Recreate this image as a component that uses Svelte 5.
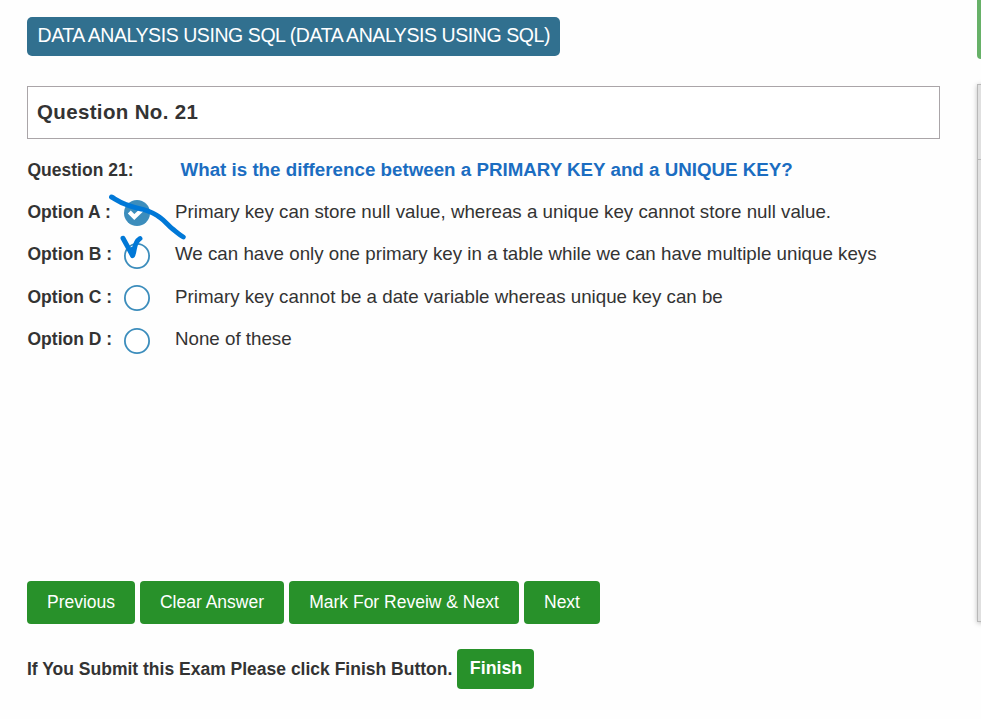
<script>
  const options = [
    { letter: 'A', text: 'Primary key can store null value, whereas a unique key cannot store null value.', checked: true },
    { letter: 'B', text: 'We can have only one primary key in a table while we can have multiple unique keys' },
    { letter: 'C', text: 'Primary key cannot be a date variable whereas unique key can be' },
    { letter: 'D', text: 'None of these' }
  ];
  const actions = [
    { label: 'Previous', width: 108 },
    { label: 'Clear Answer', width: 144 },
    { label: 'Mark For Reveiw & Next', width: 230 },
    { label: 'Next', width: 76 }
  ];
</script>

<div class="page">
  <main>
    <div class="badge"><span>DATA ANALYSIS USING SQL (DATA ANALYSIS USING SQL)</span></div>
    <div class="number"><span>Question No. 21</span></div>
    <div class="question">
      <b class="qlabel"><span>Question 21:</span></b>
      <b class="qtext"><span>What is the difference between a PRIMARY KEY and a UNIQUE KEY?</span></b>
    </div>
    <div class="options">
      {#each options as o}
        <div class="option">
          <b class="olabel"><span>Option {o.letter} :</span></b>
          <svg class="radio" width="28" height="28" viewBox="0 0 28 28">
            {#if o.checked}
              <circle cx="14" cy="14" r="13" fill="#3c8dbc" />
              <path d="M6.300 13L11.300 18L20 9.800" fill="none" stroke="#fff" stroke-width="4.200" />
            {:else}
              <circle cx="14" cy="14" r="12.1" fill="#fff" stroke="#3c8dbc" stroke-width="1.8" />
            {/if}
          </svg>
          <span class="otext">{o.text}</span>
        </div>
      {/each}
      <svg class="ink" width="90" height="80" viewBox="100 185 90 80">
        <path d="M111.500 197C116 199.500 120 202.500 126 204.500C132 207 138 208 143.500 209.500C150 211.500 155 213.500 160 217.500C165 221 168 225 172 228.500C176 231.500 179 234.500 183.300 237" />
        <path d="M123 238.200L132.600 255.700C135.500 250 133 243 140 238.500M131 251L132.600 255L133 249" />
      </svg>
    </div>
    <div class="actions">
      {#each actions as a}
        <button style="width: {a.width}px"><span>{a.label}</span></button>
      {/each}
    </div>
    <div class="submit">
      <b><span>If You Submit this Exam Please click Finish Button.</span></b>
      <button class="finish"><span>Finish</span></button>
    </div>
  </main>
  <aside>
    <div class="green"></div>
    <div class="panel"><div class="head"></div></div>
  </aside>
</div>

<style>
  :global(body) { background: #fefefe; overflow: hidden; }
  .page {
    display: flex; justify-content: space-between; width: 981px; height: 719px;
    overflow: hidden; color: #333; font-family: "Liberation Sans", Arial, sans-serif;
  }
  main { width: 913px; padding: 17px 0 0 27px; box-sizing: content-box; white-space: nowrap; }
  .badge {
    width: 533px; height: 39px; box-sizing: border-box; padding-left: 10.500px; border-radius: 5px;
    background: #31708f; color: #fff; font-size: 19.500px; line-height: 37px; letter-spacing: -.43px;
  }
  .number {
    height: 53px; box-sizing: border-box; margin-top: 30px; padding-left: 9px;
    border: 1px solid #aaa5a8; background: #fff; font-size: 20.500px; font-weight: bold; line-height: 50px;
    letter-spacing: .35px;
  }
  .question { display: flex; height: 42px; margin-top: 10px; line-height: 42px; }
  .qlabel { width: 153px; padding-left: .500px; font-size: 17.500px; }
  .qtext { color: #1b6dc1; font-size: 18.750px; }
  .options { position: relative; height: 169px; }
  .option { display: flex; height: 42.330px; line-height: 42px; }
  .olabel { width: 95.500px; padding-left: .500px; font-size: 17.500px; }
  .radio { flex: none; margin: 8px 24px 0 0; }
  .option:nth-child(even) .radio { margin-top: 9px; }
  .otext { font-size: 18.740px; }
  .ink { position: absolute; left: 73px; top: -6px; fill: none; stroke: #0078d7; stroke-width: 4.900; stroke-linecap: round; stroke-linejoin: round; }
  .actions { display: flex; gap: 5px; margin-top: 221px; }
  button {
    height: 43px; padding: 0 0 1px; border: 0; border-radius: 4px; background: #28912a;
    color: #fff; font: 17.500px "Liberation Sans", Arial, sans-serif;
  }
  .submit { display: flex; margin-top: 25px; line-height: 40px; font-size: 17.500px; }
  .submit b { width: 430px; }
  .submit .finish { width: 77px; height: 40px; padding: 0 0 2px 1px; font-weight: bold; font-size: 17.750px; }
  aside { width: 4px; }
  .green { width: 40px; height: 59px; border-radius: 0 0 0 4px; background: #67b168; }
  .panel {
    width: 40px; height: 538px; box-sizing: border-box; margin-top: 25px; border: 1px solid #b8b8b8;
    background: #e0e0e0; box-shadow: 0 1px 5px rgba(0, 0, 0, .25);
  }
  .head { height: 74px; border-bottom: 1px solid #b8b8b8; }
</style>
